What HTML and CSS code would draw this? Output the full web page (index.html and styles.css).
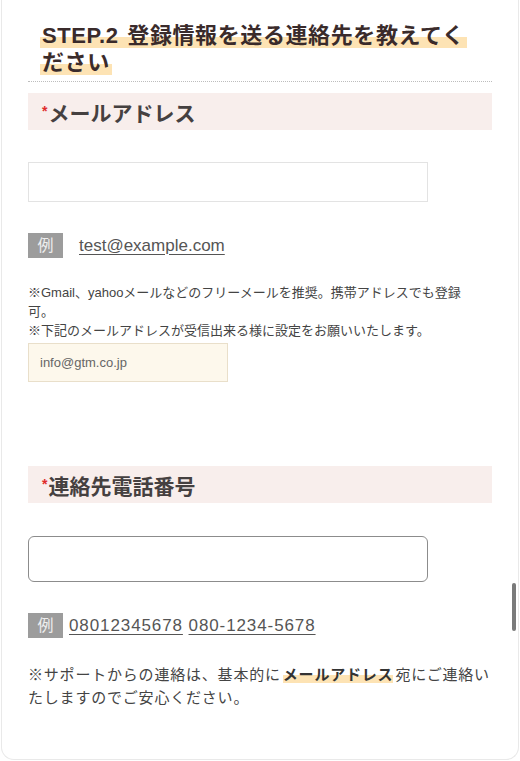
FILE: index.html
```html
<!DOCTYPE html>
<html lang="ja">
<head>
<meta charset="utf-8">
<link rel="stylesheet" href="styles.css">
</head>
<body>
<div class="card">
  <h2 class="step-title"><span class="marker">STEP.2 登録情報を送る連絡先を教えてください</span></h2>

  <div class="field">
    <div class="label"><span class="req">*</span>メールアドレス</div>
    <div class="input flat"></div>
    <div class="example">
      <span class="ex-badge">例</span>
      <span class="ex-text ex-mail"><u>test@example.com</u></span>
    </div>
    <p class="note">※Gmail、yahooメールなどのフリーメールを推奨。携帯アドレスでも登録可。<br>※下記のメールアドレスが受信出来る様に設定をお願いいたします。</p>
    <div class="info-box">info@gtm.co.jp</div>
  </div>

  <div class="field field-phone">
    <div class="label"><span class="req">*</span>連絡先電話番号</div>
    <div class="input rounded"></div>
    <div class="example">
      <span class="ex-badge">例</span>
      <span class="ex-text ex-tel"><u>08012345678</u> <u>080-1234-5678</u></span>
    </div>
    <p class="note-large">※サポートからの連絡は、基本的に<strong class="hl">メールアドレス</strong>宛にご連絡いたしますのでご安心ください。</p>
  </div>
</div>
<div class="scroll-thumb"></div>
</body>
</html>
```

FILE: styles.css
```css
* { box-sizing: border-box; }

html, body {
  margin: 0;
  padding: 0;
  background: #ffffff;
}

body {
  font-family: "Liberation Sans", "Noto Sans CJK JP", sans-serif;
  color: #444444;
  position: relative;
  height: 761px;
  overflow: hidden;
}

.card {
  margin: 0 1px;
  height: 760px;
  border: 1px solid #e9e9e9;
  border-top: none;
  border-radius: 0 0 13px 13px;
  padding: 22px 26px 0;
}

.step-title {
  margin: 0;
  padding: 0 14px 5px 14px;
  font-size: 22px;
  line-height: 27px;
  font-weight: bold;
  color: #3a2b2b;
  border-bottom: 1px dotted #bdbdbd;
  word-spacing: 2px;
}

.marker {
  background: linear-gradient(transparent 56%, #fde3b4 56%);
  -webkit-box-decoration-break: clone;
  box-decoration-break: clone;
  padding: 0 2px;
  margin-left: -2px;
  letter-spacing: 0.6px;
}

.field {
  display: flex;
  flex-direction: column;
  align-items: flex-start;
}

.label {
  align-self: stretch;
  margin-top: 11px;
  height: 37px;
  line-height: 37px;
  padding: 0 14px;
  background: #f8eeec;
  font-size: 21px;
  font-weight: bold;
  color: #454040;
}

.req {
  color: #e02b2b;
  font-size: 14px;
  vertical-align: 5px;
  margin-right: 1px;
}

.input {
  width: 400px;
  background: #fff;
}

.input.flat {
  margin-top: 32px;
  height: 40px;
  border: 1px solid #e3e3e3;
}

.input.rounded {
  margin-top: 33px;
  height: 46px;
  border: 1px solid #8c8c8c;
  border-radius: 6px;
}

.example {
  margin-top: 31px;
  display: flex;
  align-items: center;
  height: 25px;
}

.ex-badge {
  width: 35px;
  height: 25px;
  background: #9c9c9c;
  color: #eeeeee;
  font-size: 16px;
  line-height: 25px;
  text-align: center;
}

.ex-text {
  font-size: 17px;
  color: #555555;
}

.ex-text u {
  text-decoration-thickness: 1px;
  text-underline-offset: 3px;
}

.ex-mail { margin-left: 16px; }

.ex-tel {
  margin-left: 6px;
  letter-spacing: 0.9px;
}

.note {
  margin: 25px 0 0;
  max-width: 436px;
  font-size: 13px;
  line-height: 19px;
  color: #444444;
}

.info-box {
  margin-top: 3px;
  width: 200px;
  height: 39px;
  line-height: 37px;
  padding: 0 11px;
  background: #fdf8ec;
  border: 1px solid #e9dfca;
  font-size: 13px;
  color: #666666;
}

.field-phone .label { margin-top: 84px; }

.note-large {
  margin: 25px 0 0;
  font-size: 15px;
  line-height: 23px;
  letter-spacing: 0.8px;
  color: #444444;
}

.hl {
  font-weight: bold;
  color: #333333;
  margin: 0 2px;
  background: linear-gradient(transparent 55%, #fde3b4 55%);
}

.scroll-thumb {
  position: absolute;
  left: 512px;
  top: 583px;
  width: 4px;
  height: 48px;
  border-radius: 2px;
  background: #7a7a7a;
}
```
